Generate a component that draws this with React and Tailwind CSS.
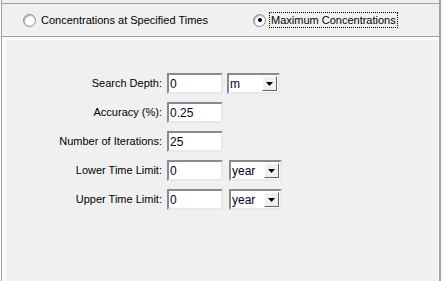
import React from "react";

const font = { fontFamily: '"Liberation Sans", Arial, sans-serif' };

function Radio({ checked }) {
  return (
    <span className="relative inline-block shrink-0 w-[13px] h-[13px] rounded-full border border-[#8a8a8a] bg-white shadow-[inset_1px_1px_1px_#b0b0b0]">
      {checked && (
        <span className="absolute left-[3.5px] top-[3.5px] w-[4px] h-[4px] rounded-full bg-black" />
      )}
    </span>
  );
}

function TextBox({ value }) {
  return (
    <div className="w-[56px] h-[21px] bg-white border-2 border-t-[#8a8a8a] border-l-[#8a8a8a] border-b-[#e8e8e8] border-r-[#e8e8e8] flex items-center pl-[1px] text-[12px] text-[#000033]">
      {value}
    </div>
  );
}

function Select({ value }) {
  return (
    <div className="w-[53px] h-[21px] bg-white border-2 border-t-[#8a8a8a] border-l-[#8a8a8a] border-b-[#e8e8e8] border-r-[#e8e8e8] flex items-center pl-[1px] text-[12px] text-[#000033]">
      <span className="flex-1">{value}</span>
      <span className="w-[15px] h-[15px] mr-[1px] bg-[#f0f0f0] border border-t-white border-l-white border-b-[#606060] border-r-[#606060] flex items-center justify-center">
        <svg width="7" height="4" viewBox="0 0 7 4">
          <path d="M0 0h7L3.5 4z" fill="#000" />
        </svg>
      </span>
    </div>
  );
}

function Row({ label, children }) {
  return (
    <div className="flex items-center h-[21px]">
      <div className="w-[156px] text-right text-[11px] text-black">{label}</div>
      <div className="ml-[5px] flex items-center gap-[4px]">{children}</div>
    </div>
  );
}

export default function App() {
  return (
    <div className="w-[445px] h-[281px] bg-[#fafafa] overflow-hidden" style={font}>
      <div className="ml-[1px] w-[440px] h-[281px] border-l border-l-[#a0a0a0] border-r-2 border-r-[#a0a0a0] flex flex-col">
        <div className="h-[3px] bg-[#f0f0f0]" />
        <div className="h-[34px] bg-[#f0f0f0] border-t border-b border-[#a0a0a0] flex items-center text-[11px] text-black">
          <div className="ml-[21px] w-[230px] flex items-center">
            <Radio />
            <span className="ml-[5px]">Concentrations at Specified Times</span>
          </div>
          <div className="flex items-center">
            <Radio checked />
            <span className="ml-[3px] px-[1px] border border-dotted border-black leading-[14px]">Maximum Concentrations</span>
          </div>
        </div>
        <div className="flex-1 mt-[3px] ml-[4px] mr-[1px] bg-[#f0f0f0] pt-[33px] flex flex-col gap-[8px]">
          <Row label="Search Depth:">
            <TextBox value="0" />
            <Select value="m" />
          </Row>
          <Row label="Accuracy (%):">
            <TextBox value="0.25" />
          </Row>
          <Row label="Number of Iterations:">
            <TextBox value="25" />
          </Row>
          <Row label="Lower Time Limit:">
            <TextBox value="0" />
            <div className="ml-[2px]"><Select value="year" /></div>
          </Row>
          <Row label="Upper Time Limit:">
            <TextBox value="0" />
            <div className="ml-[2px]"><Select value="year" /></div>
          </Row>
        </div>
      </div>
    </div>
  );
}
